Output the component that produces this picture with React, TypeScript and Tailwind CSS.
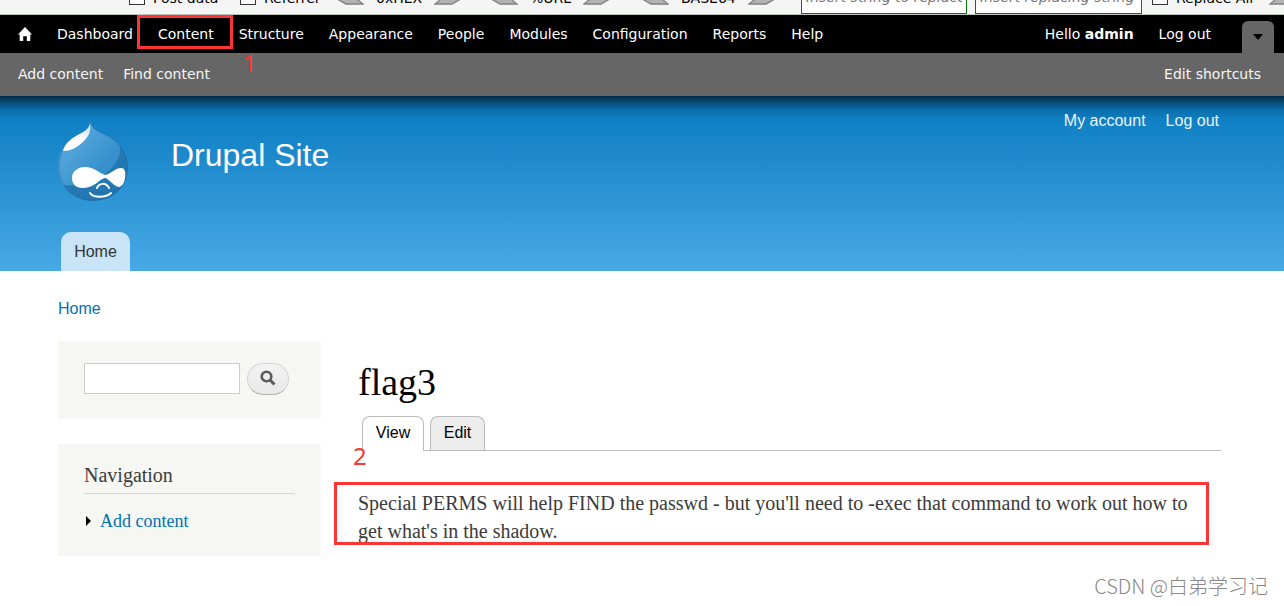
import type { ReactNode } from "react";

const serif = "font-['Liberation_Serif',serif]";
const menu = ["Structure", "Appearance", "People", "Modules", "Configuration", "Reports", "Help"];

function Arrow({ flip = false, className = "" }: { flip?: boolean; className?: string }) {
  return (
    <svg width="26" height="14" viewBox="0 0 26 14" className={`shrink-0 ${flip ? "-scale-x-100" : ""} ${className}`} aria-hidden="true">
      <path d="M-6 5L8 13.5H25.5L15 5Z" fill="#b3b3b3" />
      <path d="M-6 5L8 13H25L15 5" fill="none" stroke="#858585" strokeWidth="1.4" />
    </svg>
  );
}

function Encoder({ label, className }: { label: string; className: string }) {
  return (
    <div className={`flex shrink-0 items-end ${className}`}>
      <Arrow />
      <button type="button" className="mx-3 text-sm leading-[14px]">{label}</button>
      <Arrow flip />
    </div>
  );
}

function Tick({ label, checked = false, className }: { label: string; checked?: boolean; className: string }) {
  return (
    <label className={`flex shrink-0 items-end gap-2 leading-[14px] ${className}`}>
      <input type="checkbox" defaultChecked={checked} className="size-4 appearance-none border border-[#333] bg-white" />
      <span>{label}</span>
    </label>
  );
}

function BrowserTools() {
  return (
    <div className="relative z-20 flex h-[15px] items-end overflow-hidden border-b border-[#b8c0b8] bg-[#f5f5f5] font-['DejaVu_Sans',sans-serif] text-sm text-black">
      <div className="mb-[9px] flex shrink-0 items-end pl-[129px]">
        <Tick label="Post data" className="w-[111px]" />
        <Tick label="Referrer" className="w-[98px]" />
        <Encoder label="0xHEX" className="w-[154px]" />
        <Encoder label="%URL" className="w-[151px]" />
        <Encoder label="BASE64" className="w-[158px]" />
      </div>
      <div className="flex shrink-0 gap-2">
        <input aria-label="Search string" placeholder="Insert string to replace" className="h-8 w-[166px] border border-[#0b7a0b] bg-white px-1 pb-[2px] italic placeholder:text-[#777]" />
        <input aria-label="Replacement string" placeholder="Insert replacing string" className="h-8 w-[167px] border border-[#0b7a0b] bg-white px-1 pb-[2px] italic placeholder:text-[#777]" />
      </div>
      <div className="mb-[9px] ml-[10px] flex shrink-0 items-end">
        <Tick label="Replace All" checked className="w-[117px]" />
        <Arrow flip />
      </div>
    </div>
  );
}

function MenuLink({ children }: { children: ReactNode }) {
  return <a href="#" className="hover:underline">{children}</a>;
}

function Toolbar() {
  return (
    <div className="font-['DejaVu_Sans',sans-serif] text-sm text-white">
      <nav className="flex h-[38px] items-center bg-black pr-[10px] pl-[18px]">
        <a href="#" aria-label="Home" className="mr-[25px]">
          <svg width="14" height="14" viewBox="0 0 14 14" fill="#fff" aria-hidden="true">
            <path d="M7 0L14 7.4H12.3V14H8.8V9.2H5.2V14H1.7V7.4H0Z" />
          </svg>
        </a>
        <div className="flex gap-[25px]">
          <MenuLink>Dashboard</MenuLink>
          <div className="relative">
            <MenuLink>Content</MenuLink>
            <div className="pointer-events-none absolute -top-[9px] -left-[21px] h-[34px] w-[96px] border-[3px] border-[#ff3535]" />
            <span className="absolute top-[26px] left-[85px] font-['Noto_Sans',sans-serif] text-2xl leading-[26px] text-[#ff3535]">1</span>
          </div>
          {menu.map((m) => <MenuLink key={m}>{m}</MenuLink>)}
        </div>
        <div className="ml-auto flex items-center gap-[25px]">
          <a href="#">Hello <strong>admin</strong></a>
          <MenuLink>Log out</MenuLink>
        </div>
        <button type="button" aria-label="Hide shortcuts" className="ml-[31px] flex h-8 w-8 items-center justify-center self-end rounded-t-md bg-[#666]">
          <svg width="10" height="6" viewBox="0 0 10 6" aria-hidden="true"><path d="M0 0H10L5 6Z" fill="#000" /></svg>
        </button>
      </nav>
      <nav className="flex h-[43px] items-center gap-5 bg-[#666] pr-[23px] pb-[2px] pl-[18px] text-[#f5f5f5]">
        <MenuLink>Add content</MenuLink>
        <MenuLink>Find content</MenuLink>
        <span className="ml-auto"><MenuLink>Edit shortcuts</MenuLink></span>
      </nav>
    </div>
  );
}

function Logo() {
  return (
    <svg width="72" height="82" viewBox="0 0 72 82" aria-label="Drupal" role="img">
      <defs>
        <linearGradient id="drop" x1="0" y1="0" x2="1" y2="1">
          <stop offset="0" stopColor="#5bade0" />
          <stop offset=".3" stopColor="#4fa2d8" />
          <stop offset=".6" stopColor="#3790cc" />
          <stop offset="1" stopColor="#2b82bf" />
        </linearGradient>
        <linearGradient id="shine" x1="1" y1="0" x2="0" y2="1">
          <stop offset="0" stopColor="#c7e2f3" />
          <stop offset=".5" stopColor="#fff" />
          <stop offset="1" stopColor="#fff" />
        </linearGradient>
        <clipPath id="shape"><path d="M33 0C35 7 40 10 47 13C60 19 71 29 71 46C71 66 56 80 36 80C16 80 1 65 1 46C1 34 7 24 15 18C23 12 32 10 33 0Z" /></clipPath>
      </defs>
      <g clipPath="url(#shape)">
        <rect width="72" height="82" fill="url(#drop)" />
        <path d="M63 24C65 43 51 52 29 65L0 64V82H72V30Z" fill="#1d70aa" opacity=".75" />
      </g>
      <path d="M33 1C35 7 40 10 47 13C60 19 70 29 70 46C70 66 55 79 36 79C17 79 2 65 2 46C2 34 8 24 15 18C23 12 32 10 33 1Z" fill="none" stroke="#206a9d" strokeOpacity=".55" />
      <path d="M33 2C34 9 33 14 27 20C20 27 13 30 6 30C8 22 14 18 19 15C26 11 32 9 33 2Z" fill="url(#shine)" />
      <path d="M28 46C37 46 42 52 48 54C54 53 58 47 64 47C68 47 69 52 68 57C67 64 63 68 59 65C55 63 52 58 48 57C42 58 38 67 26 67C18 67 15 62 15 57C15 50 21 46 28 46Z" fill="#fff" />
      <path d="M40 67C42 62 49 61 52 67M33 72C36 77 49 77 54 72" fill="none" stroke="#fff" strokeWidth="2" strokeLinecap="round" />
    </svg>
  );
}

function Header() {
  return (
    <header className="flex h-[175px] flex-col bg-[linear-gradient(to_bottom,rgba(0,0,0,0.64)_0,rgba(0,0,0,0.36)_7px,rgba(0,0,0,0.12)_14px,rgba(0,0,0,0)_23px),linear-gradient(to_bottom,#0779bf,#48a9e4)] pr-[65px] pl-[57px] text-white">
      <div className="flex flex-1 items-start">
        <a href="#" className="mt-[25px]"><Logo /></a>
        <a href="#" className="mt-10 ml-[42px] text-[32px] leading-[38px]">Drupal Site</a>
        <nav className="mt-[15px] ml-auto flex gap-5 leading-5 text-[#eaf4fb]">
          <MenuLink>My account</MenuLink>
          <MenuLink>Log out</MenuLink>
        </nav>
      </div>
      <nav className="ml-1 flex">
        <a href="#" className="flex h-[39px] w-[69px] items-center justify-center rounded-t-[10px] bg-[#c8e4f6] text-[#333]">Home</a>
      </nav>
    </header>
  );
}

function Sidebar() {
  return (
    <aside className="w-[263px] shrink-0">
      <form className="flex h-[78px] items-start gap-[7px] border border-[#f9f9f9] bg-[#f6f6f2] px-[25px] pt-[21px]" onSubmit={(e) => e.preventDefault()}>
        <input aria-label="Search" className="h-[31px] w-[156px] border border-[#ccc] bg-white px-1" />
        <button type="submit" aria-label="Submit search" className="flex h-8 w-[42px] items-center justify-center rounded-2xl border border-[#d4d4d4] border-b-[#b4b4b4] bg-linear-to-b from-[#f3f3f3] to-[#e8e8e8]">
          <svg width="16" height="16" viewBox="0 0 16 16" fill="none" stroke="#5a5a5a" className="mb-[2px]" aria-hidden="true">
            <circle cx="6.5" cy="6.5" r="4.8" strokeWidth="2.6" />
            <path d="M10 10L14.5 14.5" strokeWidth="3" />
          </svg>
        </button>
      </form>
      <section className={`mt-[25px] h-[112px] border border-[#f9f9f9] bg-[#f6f6f2] px-[25px] pt-[17px] ${serif}`}>
        <h2 className="border-b border-[#d6d6d6] pb-[5px] text-xl leading-[26px] text-[#3b3b3b]">Navigation</h2>
        <a href="#" className="mt-4 flex items-center gap-[9px] pl-[2px] text-lg leading-[22px] text-[#0071b3]">
          <svg width="5" height="10" viewBox="0 0 5 10" aria-hidden="true"><path d="M0 0L5 5L0 10Z" fill="#000" /></svg>
          Add content
        </a>
      </section>
    </aside>
  );
}

function Article() {
  return (
    <main className="ml-[37px] min-w-0 flex-1">
      <h1 className={`mt-[19px] text-[38px] leading-[44px] text-black ${serif}`}>flag3</h1>
      <div className="relative mt-3 flex gap-[6px] border-b border-[#bbb] pl-1 text-black">
        <a href="#" className="-mb-px flex h-[35px] w-[62px] items-center justify-center rounded-t-lg border border-b-0 border-[#bbb] bg-white pb-[2px]">View</a>
        <a href="#" className="flex h-[34px] w-[55px] items-center justify-center rounded-t-lg border border-b-0 border-[#bbb] bg-[#ededed] pb-px">Edit</a>
        <span className="absolute top-[27px] -left-[5px] font-['Noto_Sans',sans-serif] text-2xl leading-[26px] text-[#ff3535]">2</span>
      </div>
      <div className={`relative mt-[38px] text-xl leading-7 text-[#3b3b3b] ${serif}`}>
        <p className="pr-4">Special PERMS will help FIND the passwd - but you'll need to -exec that command to work out how to get what's in the shadow.</p>
        <div className="pointer-events-none absolute -top-[7px] right-3 -left-6 h-[63px] border-[3px] border-[#ff3535]" />
      </div>
    </main>
  );
}

export default function App() {
  return (
    <div className="relative min-h-screen overflow-hidden bg-white font-['Liberation_Sans',sans-serif] text-base">
      <BrowserTools />
      <Toolbar />
      <Header />
      <div className="pr-[63px] pl-[58px]">
        <nav className="pt-7 leading-5 text-[#0071b3]"><MenuLink>Home</MenuLink></nav>
        <div className="mt-[22px] flex">
          <Sidebar />
          <Article />
        </div>
      </div>
      <div className="absolute right-4 bottom-[6px] font-['Noto_Sans_CJK_SC',sans-serif] text-xl leading-7 font-light text-[#888]">CSDN @白弟学习记</div>
    </div>
  );
}
